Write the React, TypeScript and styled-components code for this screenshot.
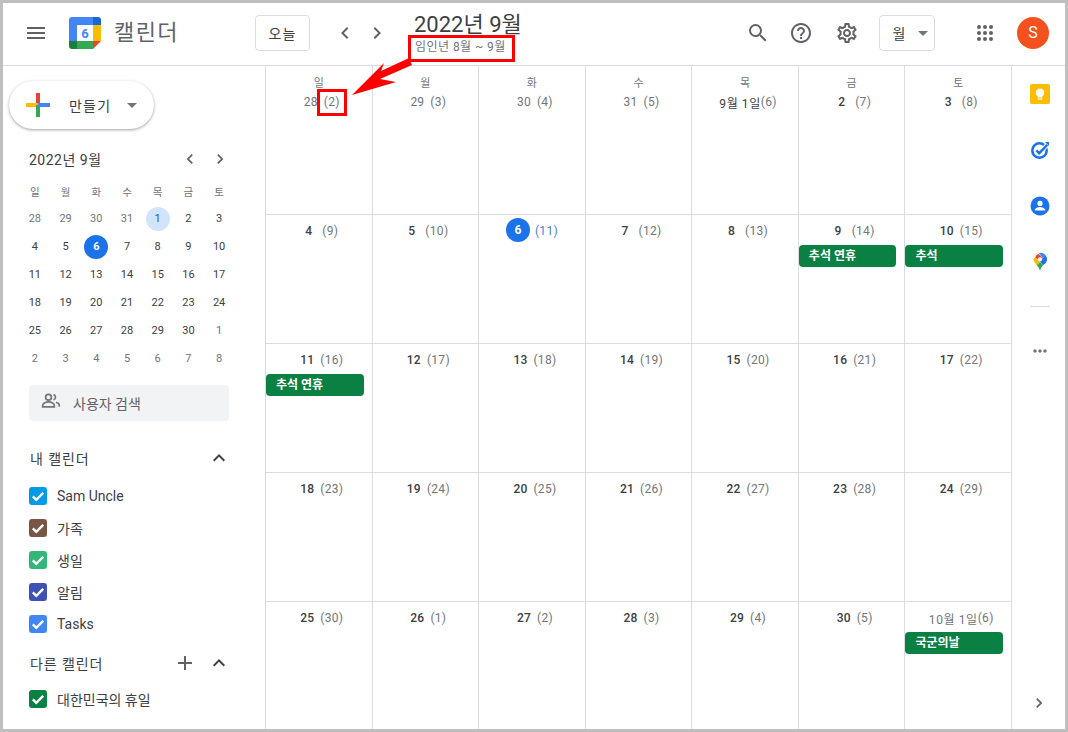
import React from "react";
import styled, { createGlobalStyle } from "styled-components";
import {
  MdMenu, MdSearch, MdHelpOutline, MdOutlineSettings, MdChevronLeft, MdChevronRight,
  MdExpandLess, MdAdd, MdArrowDropDown, MdMoreHoriz,
} from "react-icons/md";

const Global = createGlobalStyle`
  html, body { margin: 0; padding: 0; background: #fff; }
  body { font-family: Roboto, "Noto Sans CJK KR", sans-serif; color: #3c4043; }
  * { box-sizing: border-box; }
`;

const Frame = styled.div`
  position: relative; width: 1068px; height: 732px; border: 3px solid #bfbfbf;
  background: #fff; display: flex; flex-direction: column; overflow: hidden;
`;
const Header = styled.header`
  height: 63px; flex: none; display: flex; align-items: center; border-bottom: 1px solid #dadce0;
  padding: 0 16px 3px 21px;
`;
const Burger = styled.span`display: flex; color: #5f6368; font-size: 24px;`;
const LogoBox = styled.span`display: flex; margin-left: 21px; width: 32px; height: 32px;`;
const Wordmark = styled.span`
  margin-left: 13px; width: 141px; font-size: 22px; line-height: 28px; color: #5f6368; letter-spacing: 1.4px;
`;
const OutlineButton = styled.div<{ $w: number; $ml?: number }>`
  width: ${p => p.$w}px; height: 36px; border: 1px solid #dadce0; border-radius: 4px; display: flex;
  margin-left: ${p => p.$ml ?? 0}px;
  align-items: center; justify-content: center; font-size: 14px; color: #3c4043; font-weight: 400; flex: none;
  letter-spacing: 1px;
`;
const ViewCaret = styled.span`display: flex; margin: 0 -14px 0 5px; color: #70757a; font-size: 24px;`;
const NavGroup = styled.span`display: flex; gap: 8px; margin-left: 23px; color: #5f6368; font-size: 24px;`;
const TitleGroup = styled.div`margin-left: 25px; display: flex; flex-direction: column; margin-top: 1px;`;
const Title = styled.div`font-size: 22px; line-height: 26px; color: #3c4043; white-space: nowrap;`;
const Sub = styled.div`font-size: 12px; line-height: 14px; color: #70757a; margin-top: 2px; margin-left: 1px; letter-spacing: 0.45px; white-space: nowrap;`;
const RightGroup = styled.div`margin-left: auto; display: flex; align-items: center;`;
const HeadIcon = styled.span<{ $ml: number }>`display: flex; margin-left: ${p => p.$ml}px; color: #5f6368; font-size: 24px;`;
const Avatar = styled.div`
  width: 32px; height: 32px; border-radius: 50%; background: #f4511e; color: #fff; display: flex;
  align-items: center; justify-content: center; font-size: 16px; margin-left: 20px;
`;
const Body = styled.div`flex: 1; display: flex; min-height: 0;`;
const Sidebar = styled.aside`width: 262px; flex: none; display: flex; flex-direction: column; padding-top: 15px;`;
const Create = styled.div`
  margin-left: 6px; width: 145px; height: 48px; border-radius: 24px; background: #fff; flex: none;
  box-shadow: 0 1px 2px 0 rgba(60,64,67,.3), 0 1px 3px 1px rgba(60,64,67,.15);
  display: flex; align-items: center; padding-left: 16px; font-size: 14px; font-weight: 400; color: #3c4043;
  letter-spacing: 1.2px;
`;
const CreateLabel = styled.span`margin-left: 18px;`;
const CreateCaret = styled.span`display: flex; margin-left: 9px; color: #70757a; font-size: 24px;`;
const MiniHead = styled.div`
  margin: 18px 0 6px 26px; width: 201px; height: 24px; display: flex; align-items: center;
  justify-content: space-between; font-size: 14px; color: #3c4043; letter-spacing: 0.5px;
`;
const MiniNav = styled.span`display: flex; gap: 10px; color: #5f6368; font-size: 20px;`;
const MiniGrid = styled.div`
  margin-left: 16.5px; width: 215px; display: grid; grid-template-columns: repeat(7, 1fr);
  grid-auto-rows: 28px; flex: none;
`;
const MiniCell = styled.div`display: flex; align-items: center; justify-content: center;`;
const MiniLabel = styled.span`font-size: 10.5px; color: #70757a; font-weight: 400;`;
const MiniDay = styled.span<{ $kind: string }>`
  width: 24px; height: 24px; border-radius: 50%; display: flex; align-items: center; justify-content: center;
  margin-top: -1px;
  font-size: 11px; font-weight: ${p => (p.$kind === "today" ? 700 : 400)};
  color: ${p => p.$kind === "today" ? "#fff" : p.$kind === "sel" ? "#185abc" : p.$kind === "muted" ? "#70757a" : "#3c4043"};
  background: ${p => p.$kind === "today" ? "#1a73e8" : p.$kind === "sel" ? "#d2e3fc" : "transparent"};
`;
const PeopleSearch = styled.div`
  margin: 12px 0 0 26px; width: 200px; height: 36px; flex: none; border-radius: 4px; background: #f1f3f4;
  display: flex; align-items: center; padding-left: 12px; font-size: 14px; color: #5f6368;
`;
const PeopleIcon = styled.svg`margin-top: -5px; flex: none;`;
const PeopleLabel = styled.span`margin-left: 12px;`;
const SectionHead = styled.div<{ $mt: number; $mb: number }>`
  margin: ${p => p.$mt}px 0 ${p => p.$mb}px 27px; width: 201px; height: 24px; display: flex; align-items: center;
  font-size: 14px; color: #3c4043; flex: none; letter-spacing: 0.9px;
`;
const SectionIcons = styled.span`margin-left: auto; display: flex; gap: 10px; color: #3c4043; font-size: 24px;`;
const PlusIcon = styled.span`display: flex; color: #5f6368; font-size: 24px;`;
const CalRow = styled.div`
  margin-left: 26px; height: 32px; display: flex; align-items: center; font-size: 14px; color: #3c4043; flex: none;
`;
const Check = styled.span<{ $c: string }>`
  width: 18px; height: 18px; border-radius: 3px; background: ${p => p.$c}; display: flex;
  align-items: center; justify-content: center; margin-right: 10px;
`;
const MonthGrid = styled.main`
  width: 746px; flex: none; display: grid; grid-template-columns: repeat(7, 1fr);
  grid-template-rows: 149px repeat(3, 129px) 127px;
`;
const Cell = styled.div<{ $last: boolean }>`
  border-left: 1px solid #dadce0; border-bottom: ${p => (p.$last ? "none" : "1px solid #dadce0")};
  padding-top: 6px; min-width: 0;
`;
const FirstCell = styled(Cell)`padding-top: 10px;`;
const WeekLabel = styled.div`text-align: center; font-size: 11px; line-height: 16px; color: #70757a; font-weight: 400;`;
const DateLine = styled.div`height: 20px; display: flex; align-items: center; justify-content: center; padding-left: 6px; font-size: 12px; white-space: nowrap;`;
const DateNum = styled.span<{ $muted: boolean; $wide: boolean }>`
  color: ${p => (p.$muted ? "#70757a" : "#3c4043")};
  font-weight: ${p => (p.$muted || p.$wide ? 400 : 500)};
  letter-spacing: ${p => (p.$wide ? "0.6px" : "0.2px")};
`;
const Paren = styled.span<{ $gap: number; $blue?: boolean }>`
  margin-left: ${p => p.$gap}px; color: ${p => (p.$blue ? "#4a7fd8" : "#70757a")}; letter-spacing: 0.3px;
`;
const TodayBubble = styled.span`
  width: 24px; height: 24px; border-radius: 50%; background: #1a73e8; color: #fff; display: flex;
  align-items: center; justify-content: center; font-size: 12px; font-weight: 700; margin: -2px 0 0 -6px;
`;
const Chip = styled.div`
  margin-top: 4px; width: calc(100% - 8px); height: 22px; border-radius: 4px; background: #0b8043; color: #fff;
  font-size: 12px; font-weight: 700; line-height: 22px; padding-left: 10px;
`;
const Rail = styled.aside`
  flex: 1; border-left: 1px solid #dadce0; display: flex; flex-direction: column; align-items: center; padding: 18px 0 0 2px;
`;
const RailIcon = styled.span`display: flex; height: 20px; margin-bottom: 36px;`;
const RailSep = styled.div`width: 20px; height: 1px; background: #dadce0; margin: -2px 0 34px;`;
const RailMore = styled.span`display: flex; color: #70757a; font-size: 20px;`;
const RailChevron = styled.span`display: flex; margin: auto 2px 16px 0; color: #5f6368; font-size: 20px;`;
const RedBox = styled.div<{ $x: number; $y: number; $w: number; $h: number }>`
  position: absolute; left: ${p => p.$x}px; top: ${p => p.$y}px; width: ${p => p.$w}px; height: ${p => p.$h}px;
  border: 3px solid #f00;
`;
const Arrow = styled.svg`position: absolute; left: 347px; top: 52px;`;

const Logo = () => (
  <svg width="32" height="32" viewBox="0 0 32 32">
    <path d="M3 0h21v8H8v16H0V3a3 3 0 0 1 3-3z" fill="#4285f4" />
    <path d="M24 0h5a3 3 0 0 1 3 3v5h-8z" fill="#1967d2" />
    <rect x="24" y="8" width="8" height="16" fill="#fbbc04" />
    <rect x="8" y="24" width="16" height="8" fill="#34a853" />
    <path d="M0 24h8v8H3a3 3 0 0 1-3-3z" fill="#188038" />
    <path d="M24 24h8l-8 8z" fill="#ea4335" />
    <rect x="8" y="8" width="16" height="16" fill="#fff" />
    <text x="16" y="21" textAnchor="middle" fontSize="13" fontWeight="700" fontFamily="Roboto, sans-serif" fill="#4285f4">6</text>
  </svg>
);
const Apps = () => (
  <svg width="24" height="24" viewBox="0 0 24 24" fill="#5f6368">
    {[6, 12, 18].flatMap(y => [6, 12, 18].map(x => <circle key={`${x}-${y}`} cx={x} cy={y} r="2" />))}
  </svg>
);
const PlusLogo = () => (
  <svg width="26" height="26" viewBox="0 0 26 26">
    <rect x="11" y="1" width="4" height="12" fill="#ea4335" />
    <rect x="1" y="11" width="12" height="4" fill="#fbbc04" />
    <rect x="11" y="13" width="4" height="12" fill="#34a853" />
    <rect x="13" y="11" width="12" height="4" fill="#4285f4" />
  </svg>
);
const Tick = () => (
  <svg width="18" height="18" viewBox="0 0 18 18" fill="none">
    <path d="M3.800 9.300l3.500 3.500 6.900-7" stroke="#fff" strokeWidth="2.400" />
  </svg>
);
const People = () => (
  <PeopleIcon width="20" height="20" viewBox="0 0 24 24" fill="none" stroke="#70757a" strokeWidth="2">
    <circle cx="9" cy="7.500" r="3.500" />
    <path d="M2 19v-1.600c0-2.600 4.400-4.400 7-4.400s7 1.800 7 4.400V19z" />
    <path d="M15 4.200a3.500 3.500 0 0 1 0 6.600" />
    <path d="M18 13.500c2.200.6 4 1.900 4 3.900V19" />
  </PeopleIcon>
);
const Keep = () => (
  <svg width="20" height="20" viewBox="0 0 20 20">
    <rect width="20" height="20" rx="2" fill="#fbbc04" />
    <path d="M10 4.500a4.200 4.200 0 0 0-2.300 7.700v1.300h4.600v-1.300A4.200 4.200 0 0 0 10 4.500z" fill="#fff" />
    <rect x="7.700" y="14.400" width="4.600" height="1.300" fill="#fff" />
  </svg>
);
const Tasks = () => (
  <svg width="20" height="20" viewBox="0 0 20 20" fill="none">
    <circle cx="9.500" cy="10.500" r="7.200" stroke="#1a73e8" strokeWidth="2.600" />
    <path d="M6.300 10.300l2.900 2.900 8-8.400" stroke="#fff" strokeWidth="4.400" />
    <path d="M6.300 10.300l2.900 2.900 8-8.400" stroke="#1a73e8" strokeWidth="2.400" />
    <path d="M15 2h4v4z" fill="#1a73e8" />
  </svg>
);
const Contacts = () => (
  <svg width="20" height="20" viewBox="0 0 20 20">
    <circle cx="10" cy="10" r="9.500" fill="#1a73e8" />
    <circle cx="10" cy="7.400" r="2.600" fill="#fff" />
    <path d="M4.800 14c0-2 3.400-3 5.200-3s5.200 1 5.200 3v.6H4.800z" fill="#fff" />
  </svg>
);
const Maps = () => (
  <svg width="20" height="20" viewBox="0 0 20 20">
    <path d="M10 19c-.6-2.600-2-4.200-3.300-5.900L10 10l3.300 3.100C12 14.800 10.600 16.400 10 19z" fill="#34a853" />
    <path d="M5.200 5.300 3.600 7.200c0 2.300 1.500 4.100 3.100 5.900L10 9.500z" fill="#fbbc04" />
    <path d="M5.200 5.300 10 9.500l3-3.300L8.700 2A6.300 6.300 0 0 0 5.200 5.300z" fill="#ea4335" />
    <path d="M8.700 1.100A6.400 6.400 0 0 1 15.400 3L13 6.200z" fill="#4285f4" />
    <path d="M15.400 3A6.400 6.400 0 0 1 13.300 13.100L10 9.500 13 6.200z" fill="#1a73e8" />
    <circle cx="10" cy="7.300" r="2.100" fill="#fff" opacity=".95" />
  </svg>
);

const weekdays = ["일", "월", "화", "수", "목", "금", "토"];
const miniRows: [string, string?][][] = [
  [["28", "muted"], ["29", "muted"], ["30", "muted"], ["31", "muted"], ["1", "sel"], ["2"], ["3"]],
  [["4"], ["5"], ["6", "today"], ["7"], ["8"], ["9"], ["10"]],
  [["11"], ["12"], ["13"], ["14"], ["15"], ["16"], ["17"]],
  [["18"], ["19"], ["20"], ["21"], ["22"], ["23"], ["24"]],
  [["25"], ["26"], ["27"], ["28"], ["29"], ["30"], ["1", "muted"]],
  [["2", "muted"], ["3", "muted"], ["4", "muted"], ["5", "muted"], ["6", "muted"], ["7", "muted"], ["8", "muted"]],
];

type Day = { n: string; p: string; muted?: boolean; gap?: number; today?: boolean; event?: string };
const g = (n: string, p: string, extra: Partial<Day> = {}): Day => ({
  n, p, gap: n.length === 1 ? 10 : 6, ...extra,
});
const weeks: Day[][] = [
  [g("28", "2", { muted: true }), g("29", "3", { muted: true }), g("30", "4", { muted: true }), g("31", "5", { muted: true }), g("9월 1일", "6", { gap: 0 }), g("2", "7"), g("3", "8")],
  [g("4", "9"), g("5", "10"), g("6", "11", { today: true, gap: 5 }), g("7", "12"), g("8", "13"), g("9", "14", { event: "추석 연휴" }), g("10", "15", { event: "추석" })],
  [g("11", "16", { event: "추석 연휴" }), g("12", "17"), g("13", "18"), g("14", "19"), g("15", "20"), g("16", "21"), g("17", "22")],
  [g("18", "23"), g("19", "24"), g("20", "25"), g("21", "26"), g("22", "27"), g("23", "28"), g("24", "29")],
  [g("25", "30"), g("26", "1"), g("27", "2"), g("28", "3"), g("29", "4"), g("30", "5"), g("10월 1일", "6", { gap: 0, muted: true, event: "국군의날" })],
];
const myCalendars = [
  { name: "Sam Uncle", color: "#039be5" },
  { name: "가족", color: "#795548" },
  { name: "생일", color: "#33b679" },
  { name: "알림", color: "#3f51b5" },
  { name: "Tasks", color: "#4285f4" },
];

export default function App() {
  return (
    <Frame>
      <Global />
      <Header>
        <Burger><MdMenu /></Burger>
        <LogoBox><Logo /></LogoBox>
        <Wordmark>캘린더</Wordmark>
        <OutlineButton $w={55}>오늘</OutlineButton>
        <NavGroup><MdChevronLeft /><MdChevronRight /></NavGroup>
        <TitleGroup>
          <Title>2022년 9월</Title>
          <Sub>임인년 8월 ~ 9월</Sub>
        </TitleGroup>
        <RightGroup>
          <HeadIcon $ml={0}><MdSearch /></HeadIcon>
          <HeadIcon $ml={19}><MdHelpOutline /></HeadIcon>
          <HeadIcon $ml={22}><MdOutlineSettings /></HeadIcon>
          <OutlineButton $w={56} $ml={20}>
            월<ViewCaret><MdArrowDropDown /></ViewCaret>
          </OutlineButton>
          <HeadIcon $ml={38}><Apps /></HeadIcon>
        </RightGroup>
        <Avatar>S</Avatar>
      </Header>
      <Body>
        <Sidebar>
          <Create>
            <PlusLogo />
            <CreateLabel>만들기</CreateLabel>
            <CreateCaret><MdArrowDropDown /></CreateCaret>
          </Create>
          <MiniHead>
            <span>2022년 9월</span>
            <MiniNav><MdChevronLeft /><MdChevronRight /></MiniNav>
          </MiniHead>
          <MiniGrid>
            {weekdays.map(w => <MiniCell key={w}><MiniLabel>{w}</MiniLabel></MiniCell>)}
            {miniRows.flat().map(([d, k], i) => (
              <MiniCell key={i}><MiniDay $kind={k ?? "normal"}>{d}</MiniDay></MiniCell>
            ))}
          </MiniGrid>
          <PeopleSearch>
            <People />
            <PeopleLabel>사용자 검색</PeopleLabel>
          </PeopleSearch>
          <SectionHead $mt={25} $mb={10}>
            내 캘린더
            <SectionIcons><MdExpandLess /></SectionIcons>
          </SectionHead>
          {myCalendars.map(c => (
            <CalRow key={c.name}>
              <Check $c={c.color}><Tick /></Check>
              {c.name}
            </CalRow>
          ))}
          <SectionHead $mt={11} $mb={8}>
            다른 캘린더
            <SectionIcons><PlusIcon><MdAdd /></PlusIcon><MdExpandLess /></SectionIcons>
          </SectionHead>
          <CalRow>
            <Check $c="#0b8043"><Tick /></Check>
            대한민국의 휴일
          </CalRow>
        </Sidebar>
        <MonthGrid>
          {weeks.map((week, wi) =>
            week.map((day, di) => {
              const C = wi === 0 ? FirstCell : Cell;
              return (
                <C key={`${wi}-${di}`} $last={wi === 4}>
                  {wi === 0 && <WeekLabel>{weekdays[di]}</WeekLabel>}
                  <DateLine>
                    {day.today
                      ? <TodayBubble>{day.n}</TodayBubble>
                      : <DateNum $muted={!!day.muted} $wide={day.n.length > 2}>{day.n}</DateNum>}
                    <Paren $gap={day.gap ?? 6} $blue={day.today}>({day.p})</Paren>
                  </DateLine>
                  {day.event && <Chip>{day.event}</Chip>}
                </C>
              );
            })
          )}
        </MonthGrid>
        <Rail>
          <RailIcon><Keep /></RailIcon>
          <RailIcon><Tasks /></RailIcon>
          <RailIcon><Contacts /></RailIcon>
          <RailIcon><Maps /></RailIcon>
          <RailSep />
          <RailMore><MdMoreHoriz /></RailMore>
          <RailChevron><MdChevronRight /></RailChevron>
        </Rail>
      </Body>
      <RedBox $x={405} $y={32} $w={107} $h={27} />
      <RedBox $x={314} $y={86} $w={30} $h={27} />
      <Arrow width="70" height="46" viewBox="0 0 70 46">
        <polygon points="2,40 34,8 31,16 59,3 62,10 30,24 46,27" fill="#f00" />
      </Arrow>
    </Frame>
  );
}
